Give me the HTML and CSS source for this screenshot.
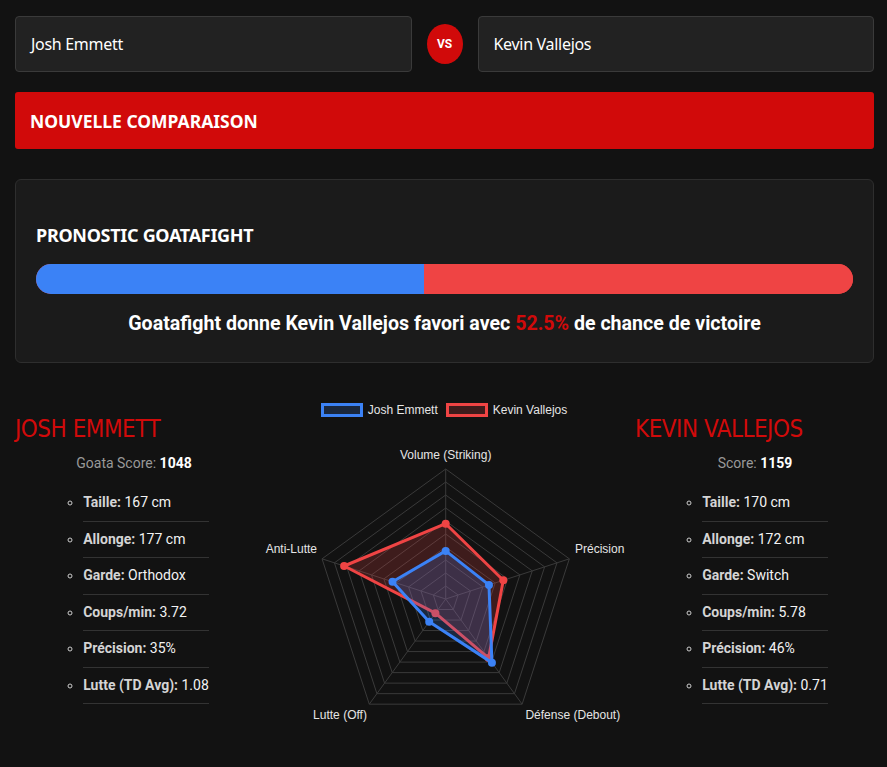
FILE: index.html
```html
<!DOCTYPE html>
<html lang="fr">
<head>
<meta charset="utf-8">
<title>Goatafight – Comparaison</title>
<link rel="stylesheet" href="styles.css">
</head>
<body>
<div class="page">
  <div class="pickers">
    <div class="picker">Josh Emmett</div>
    <div class="vs">VS</div>
    <div class="picker">Kevin Vallejos</div>
  </div>

  <button class="new-btn">NOUVELLE COMPARAISON</button>

  <section class="card">
    <h2 class="card-title">PRONOSTIC GOATAFIGHT</h2>
    <div class="bar">
      <div class="bar-a" style="width:47.5%"></div>
      <div class="bar-b"></div>
    </div>
    <p class="verdict">Goatafight donne Kevin Vallejos favori avec <span class="pct">52.5%</span> de chance de victoire</p>
  </section>

  <section class="compare">
    <div class="fighter fighter-left">
      <h3 class="fighter-name">JOSH EMMETT</h3>
      <p class="score">Goata Score: <b>1048</b></p>
      <div class="stats-wrap">
        <ul class="stats">
          <li><b>Taille:</b> 167 cm</li>
          <li><b>Allonge:</b> 177 cm</li>
          <li><b>Garde:</b> Orthodox</li>
          <li><b>Coups/min:</b> 3.72</li>
          <li><b>Précision:</b> 35%</li>
          <li><b>Lutte (TD Avg):</b> 1.08</li>
        </ul>
      </div>
    </div>

    <div class="chart">
      <div class="legend">
        <span class="legend-item"><i class="swatch swatch-blue"></i>Josh Emmett</span>
        <span class="legend-item"><i class="swatch swatch-red"></i>Kevin Vallejos</span>
      </div>
      <svg class="radar" width="382" height="318" viewBox="0 0 382 318">
        <defs>
          <polygon id="pent" points="0,-1 0.95106,-0.30902 0.58779,0.80902 -0.58779,0.80902 -0.95106,-0.30902" fill="none" stroke="#3a3a3a" stroke-width="1" vector-effect="non-scaling-stroke"/>
        </defs>
        <g transform="translate(192.7,182)">
          <use href="#pent" transform="scale(13)"/>
          <use href="#pent" transform="scale(26)"/>
          <use href="#pent" transform="scale(39)"/>
          <use href="#pent" transform="scale(52)"/>
          <use href="#pent" transform="scale(65)"/>
          <use href="#pent" transform="scale(78)"/>
          <use href="#pent" transform="scale(91)"/>
          <use href="#pent" transform="scale(104)"/>
          <use href="#pent" transform="scale(117)"/>
          <use href="#pent" transform="scale(130)"/>
          <g stroke="#3a3a3a" stroke-width="1">
            <line x1="0" y1="0" x2="0" y2="-130"/>
            <line x1="0" y1="0" x2="123.64" y2="-40.17"/>
            <line x1="0" y1="0" x2="76.41" y2="105.17"/>
            <line x1="0" y1="0" x2="-76.41" y2="105.17"/>
            <line x1="0" y1="0" x2="-123.64" y2="-40.17"/>
          </g>

          <polygon points="0,-75.3 57.6,-18.7 42.9,59.1 -10.3,14.2 -101.6,-33" fill="rgba(239,68,68,0.2)" stroke="#ef4444" stroke-width="3" stroke-linejoin="round"/>
          <g fill="#ef4444">
            <circle cx="0" cy="-75.3" r="4"/>
            <circle cx="57.6" cy="-18.7" r="4"/>
            <circle cx="42.9" cy="59.1" r="4"/>
            <circle cx="-10.3" cy="14.2" r="4"/>
            <circle cx="-101.6" cy="-33" r="4"/>
          </g>

          <polygon points="0,-48.1 43.27,-14.06 46.23,63.63 -16.5,22.7 -53.2,-17.3" fill="rgba(59,130,246,0.2)" stroke="#3b82f6" stroke-width="3" stroke-linejoin="round"/>
          <g fill="#3b82f6">
            <circle cx="0" cy="-48.1" r="4"/>
            <circle cx="43.27" cy="-14.06" r="4"/>
            <circle cx="46.23" cy="63.63" r="4"/>
            <circle cx="-16.5" cy="22.7" r="4"/>
            <circle cx="-53.2" cy="-17.3" r="4"/>
          </g>

          <g class="axis-label">
            <text x="0" y="-140" text-anchor="middle">Volume (Striking)</text>
            <text x="129.3" y="-46" text-anchor="start">Précision</text>
            <text x="127.1" y="120" text-anchor="middle">Défense (Debout)</text>
            <text x="-105.7" y="120" text-anchor="middle">Lutte (Off)</text>
            <text x="-128.7" y="-46" text-anchor="end">Anti-Lutte</text>
          </g>
        </g>
      </svg>
    </div>

    <div class="fighter fighter-right">
      <h3 class="fighter-name">KEVIN VALLEJOS</h3>
      <p class="score">Score: <b>1159</b></p>
      <div class="stats-wrap">
        <ul class="stats">
          <li><b>Taille:</b> 170 cm</li>
          <li><b>Allonge:</b> 172 cm</li>
          <li><b>Garde:</b> Switch</li>
          <li><b>Coups/min:</b> 5.78</li>
          <li><b>Précision:</b> 46%</li>
          <li><b>Lutte (TD Avg):</b> 0.71</li>
        </ul>
      </div>
    </div>
  </section>
</div>
</body>
</html>
```

FILE: styles.css
```css
* { box-sizing: border-box; }

body {
  margin: 0;
  background: #121212;
  color: #fff;
  font-family: Roboto, "Liberation Sans", sans-serif;
}

.page {
  padding: 16px 13px 0 15px;
}

/* top pickers */
.pickers {
  display: flex;
  align-items: center;
  gap: 15px;
}

.picker {
  flex: 1;
  height: 56px;
  display: flex;
  align-items: center;
  padding: 0 15px;
  background: #222;
  border: 1px solid #3a3a3a;
  border-radius: 4px;
  font-family: "Noto Sans", sans-serif;
  font-size: 16px;
  letter-spacing: -0.3px;
  color: #fff;
}

.vs {
  width: 36px;
  height: 40px;
  flex: none;
  border-radius: 50%;
  background: #d10a0a;
  display: flex;
  align-items: center;
  justify-content: center;
  font-family: Roboto, sans-serif;
  font-weight: 700;
  font-size: 12px;
  color: #fff;
}

.new-btn {
  display: block;
  width: 100%;
  height: 57px;
  margin-top: 20px;
  padding: 0 15px;
  border: 0;
  border-radius: 3px;
  background: #d10a0a;
  color: #fff;
  text-align: left;
  font-family: "Noto Sans", sans-serif;
  font-weight: 700;
  font-size: 17.5px;
}

/* prediction card */
.card {
  margin-top: 30px;
  padding: 43px 20px 26px;
  background: #1b1b1b;
  border: 1px solid #2e2e2e;
  border-radius: 6px;
}

.card-title {
  margin: 0;
  font-family: "Noto Sans", sans-serif;
  font-weight: 700;
  font-size: 18px;
  letter-spacing: -0.3px;
  line-height: 24px;
}

.bar {
  display: flex;
  height: 30px;
  margin-top: 17px;
  border-radius: 15px;
  overflow: hidden;
  background: #ef4444;
}

.bar-a { background: #3b82f6; }
.bar-b { flex: 1; background: #ef4444; }

.verdict {
  margin: 18px 0 0;
  text-align: center;
  font-weight: 700;
  font-size: 19.6px;
  line-height: 24px;
}

.pct { color: #d10a0a; }

/* comparison */
.compare {
  display: flex;
  margin-top: 30px;
}

.fighter {
  width: 238px;
  flex: none;
}

.fighter-right {
  width: 240px;
}

.chart {
  width: 382px;
  flex: none;
}

.fighter-name {
  margin: 21px 0 0;
  font-family: "DejaVu Sans Condensed", "Noto Sans", sans-serif;
  font-weight: 400;
  font-size: 24px;
  letter-spacing: -0.5px;
  line-height: 30px;
  color: #d10a0a;
}

.score {
  margin: 9px 0 0;
  text-align: center;
  font-size: 14px;
  line-height: 20px;
  color: #999;
}

.score b { color: #fff; }

.stats-wrap {
  text-align: center;
  margin-top: 12px;
}

.stats {
  display: inline-block;
  margin: 0;
  padding: 0 0 0 20px;
  text-align: left;
  list-style: circle;
  color: #ccc;
}

.fighter-left .stats {
  margin-left: 4px;
}

.stats li {
  padding: 8px 0;
  border-bottom: 1px solid #333;
  font-size: 14px;
  line-height: 19.5px;
  color: #f2f2f2;
}

.stats li::marker { color: #ccc; }

.stats b {
  color: #d4d4d4;
}

/* chart */
.legend {
  display: flex;
  justify-content: center;
  gap: 8px;
  padding-top: 10px;
  height: 24px;
  font-family: "Liberation Sans", Arial, sans-serif;
  font-size: 12px;
  color: #e5e5e5;
}

.legend-item {
  display: flex;
  align-items: center;
  gap: 5px;
  height: 14px;
}

.swatch {
  display: block;
  width: 42px;
  height: 14px;
  border: 3px solid;
}

.swatch-blue {
  border-color: #3b82f6;
  background: rgba(59, 130, 246, 0.2);
}

.swatch-red {
  border-color: #ef4444;
  background: rgba(239, 68, 68, 0.2);
}

.radar {
  display: block;
}

.axis-label {
  font-family: "Liberation Sans", Arial, sans-serif;
  font-size: 12px;
  fill: #e5e5e5;
}
```
